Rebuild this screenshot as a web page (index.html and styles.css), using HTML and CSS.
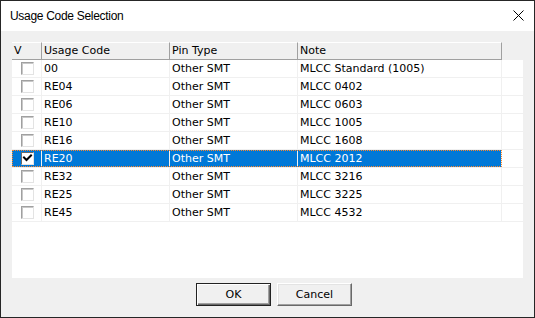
FILE: index.html
```html
<!DOCTYPE html>
<html>
<head>
<meta charset="utf-8">
<link rel="stylesheet" href="styles.css">
</head>
<body>
<div class="window">
  <div class="titlebar">
    <span class="title">Usage Code Selection</span>
    <svg class="close" width="11" height="11" viewBox="0 0 11 11"><path d="M0.5 0.5 L10.5 10.5 M10.5 0.5 L0.5 10.5" stroke="#000" stroke-width="1" fill="none"/></svg>
  </div>
  <div class="content">
    <div class="listview">
      <div class="header">
        <div class="hcells">
          <div class="hc c1">V</div>
          <div class="hc c2">Usage Code</div>
          <div class="hc c3">Pin Type</div>
          <div class="hc c4">Note</div>
        </div>
        <div class="hfill"></div>
      </div>
      <div class="row"><div class="cells"><div class="c c1"><span class="cb"></span></div><div class="c c2">00</div><div class="c c3">Other SMT</div><div class="c c4">MLCC Standard (1005)</div></div><div class="fill"></div></div>
      <div class="row"><div class="cells"><div class="c c1"><span class="cb"></span></div><div class="c c2">RE04</div><div class="c c3">Other SMT</div><div class="c c4">MLCC 0402</div></div><div class="fill"></div></div>
      <div class="row"><div class="cells"><div class="c c1"><span class="cb"></span></div><div class="c c2">RE06</div><div class="c c3">Other SMT</div><div class="c c4">MLCC 0603</div></div><div class="fill"></div></div>
      <div class="row"><div class="cells"><div class="c c1"><span class="cb"></span></div><div class="c c2">RE10</div><div class="c c3">Other SMT</div><div class="c c4">MLCC 1005</div></div><div class="fill"></div></div>
      <div class="row"><div class="cells"><div class="c c1"><span class="cb"></span></div><div class="c c2">RE16</div><div class="c c3">Other SMT</div><div class="c c4">MLCC 1608</div></div><div class="fill"></div></div>
      <div class="row selected"><div class="cells"><div class="c c1"><span class="cb checked"><svg width="11" height="11" viewBox="0 0 11 11"><path d="M2 4.5 L4.5 7 L9 2.5" stroke="#000" stroke-width="2" fill="none" stroke-linecap="square"/></svg></span></div><div class="c c2">RE20</div><div class="c c3">Other SMT</div><div class="c c4">MLCC 2012</div></div><div class="fill"></div></div>
      <div class="row"><div class="cells"><div class="c c1"><span class="cb"></span></div><div class="c c2">RE32</div><div class="c c3">Other SMT</div><div class="c c4">MLCC 3216</div></div><div class="fill"></div></div>
      <div class="row"><div class="cells"><div class="c c1"><span class="cb"></span></div><div class="c c2">RE25</div><div class="c c3">Other SMT</div><div class="c c4">MLCC 3225</div></div><div class="fill"></div></div>
      <div class="row"><div class="cells"><div class="c c1"><span class="cb"></span></div><div class="c c2">RE45</div><div class="c c3">Other SMT</div><div class="c c4">MLCC 4532</div></div><div class="fill"></div></div>
    </div>
    <div class="buttons">
      <div class="btn default">OK</div>
      <div class="btn">Cancel</div>
    </div>
  </div>
</div>
</body>
</html>
```
FILE: styles.css
```css
html, body {
  margin: 0;
  padding: 0;
  background: #f0f0f0;
}
.window {
  width: 535px;
  height: 318px;
  box-sizing: border-box;
  border: 1px solid #262626;
  background: #f0f0f0;
  display: flex;
  flex-direction: column;
  font-family: "DejaVu Sans", sans-serif;
  font-size: 11px;
  color: #000;
}
.titlebar {
  height: 30px;
  background: #fff;
  display: flex;
  align-items: flex-start;
  justify-content: space-between;
}
.title {
  font-family: "Liberation Sans", Arial, sans-serif;
  font-size: 12px;
  letter-spacing: -0.3px;
  line-height: 30px;
  padding-left: 9px;
}
.close {
  margin-top: 9px;
  margin-right: 10px;
}
.content {
  padding: 11px 0 0 11px;
  display: flex;
  flex-direction: column;
}
.listview {
  width: 511px;
  height: 236px;
  background: #fff;
  display: flex;
  flex-direction: column;
}
.header {
  display: flex;
  height: 18px;
  background: #f0f0f0;
}
.hcells {
  display: flex;
}
.hc {
  box-sizing: border-box;
  height: 18px;
  border-top: 1px solid #fff;
  border-bottom: 1px solid #a0a0a0;
  border-right: 1px solid #a0a0a0;
  line-height: 16px;
  padding-left: 2px;
  white-space: nowrap;
}
.hfill {
  flex: 1;
}
.c1 { width: 30px; }
.c2 { width: 128px; }
.c3 { width: 128px; }
.c4 { width: 204px; }
.row {
  display: flex;
  height: 18px;
  box-sizing: border-box;
  border-bottom: 1px solid #f0f0f0;
}
.cells {
  display: flex;
}
.c {
  box-sizing: border-box;
  height: 17px;
  line-height: 17px;
  border-right: 1px solid #f0f0f0;
  padding-left: 2px;
  white-space: nowrap;
}
.c.c1 {
  padding-left: 0;
  display: flex;
  align-items: center;
  justify-content: center;
}
.fill {
  flex: 1;
}
.cb {
  width: 13px;
  height: 13px;
  box-sizing: border-box;
  background: #fff;
  border: 1px solid;
  border-color: #a0a0a0 #e3e3e3 #e3e3e3 #a0a0a0;
  box-shadow: inset 1px 1px 0 #c8c8c8;
  display: block;
  margin-left: 1px;
}
.cb.checked {
  border-color: #696969 #e3e3e3 #e3e3e3 #696969;
  box-shadow: none;
}
.cb svg {
  display: block;
}
.row.selected {
  border-bottom-color: #f0f0f0;
}
.row.selected .cells {
  background: #0078d7;
  color: #fff;
  outline: 1px dotted #ff8728;
  outline-offset: -1px;
}
.buttons {
  display: flex;
  gap: 6px;
  margin-top: 5px;
  padding-left: 184px;
}
.btn {
  width: 75px;
  height: 23px;
  box-sizing: border-box;
  background: #f0f0f0;
  border: 1px solid;
  border-color: #fff #696969 #696969 #fff;
  box-shadow: inset -1px -1px 0 #a0a0a0, inset 1px 1px 0 #e3e3e3;
  text-align: center;
  line-height: 21px;
}
.btn.default {
  border-color: #222;
  box-shadow: inset 1px 1px 0 #fff, inset -1px -1px 0 #696969, inset -2px -2px 0 #a0a0a0;
}
```
